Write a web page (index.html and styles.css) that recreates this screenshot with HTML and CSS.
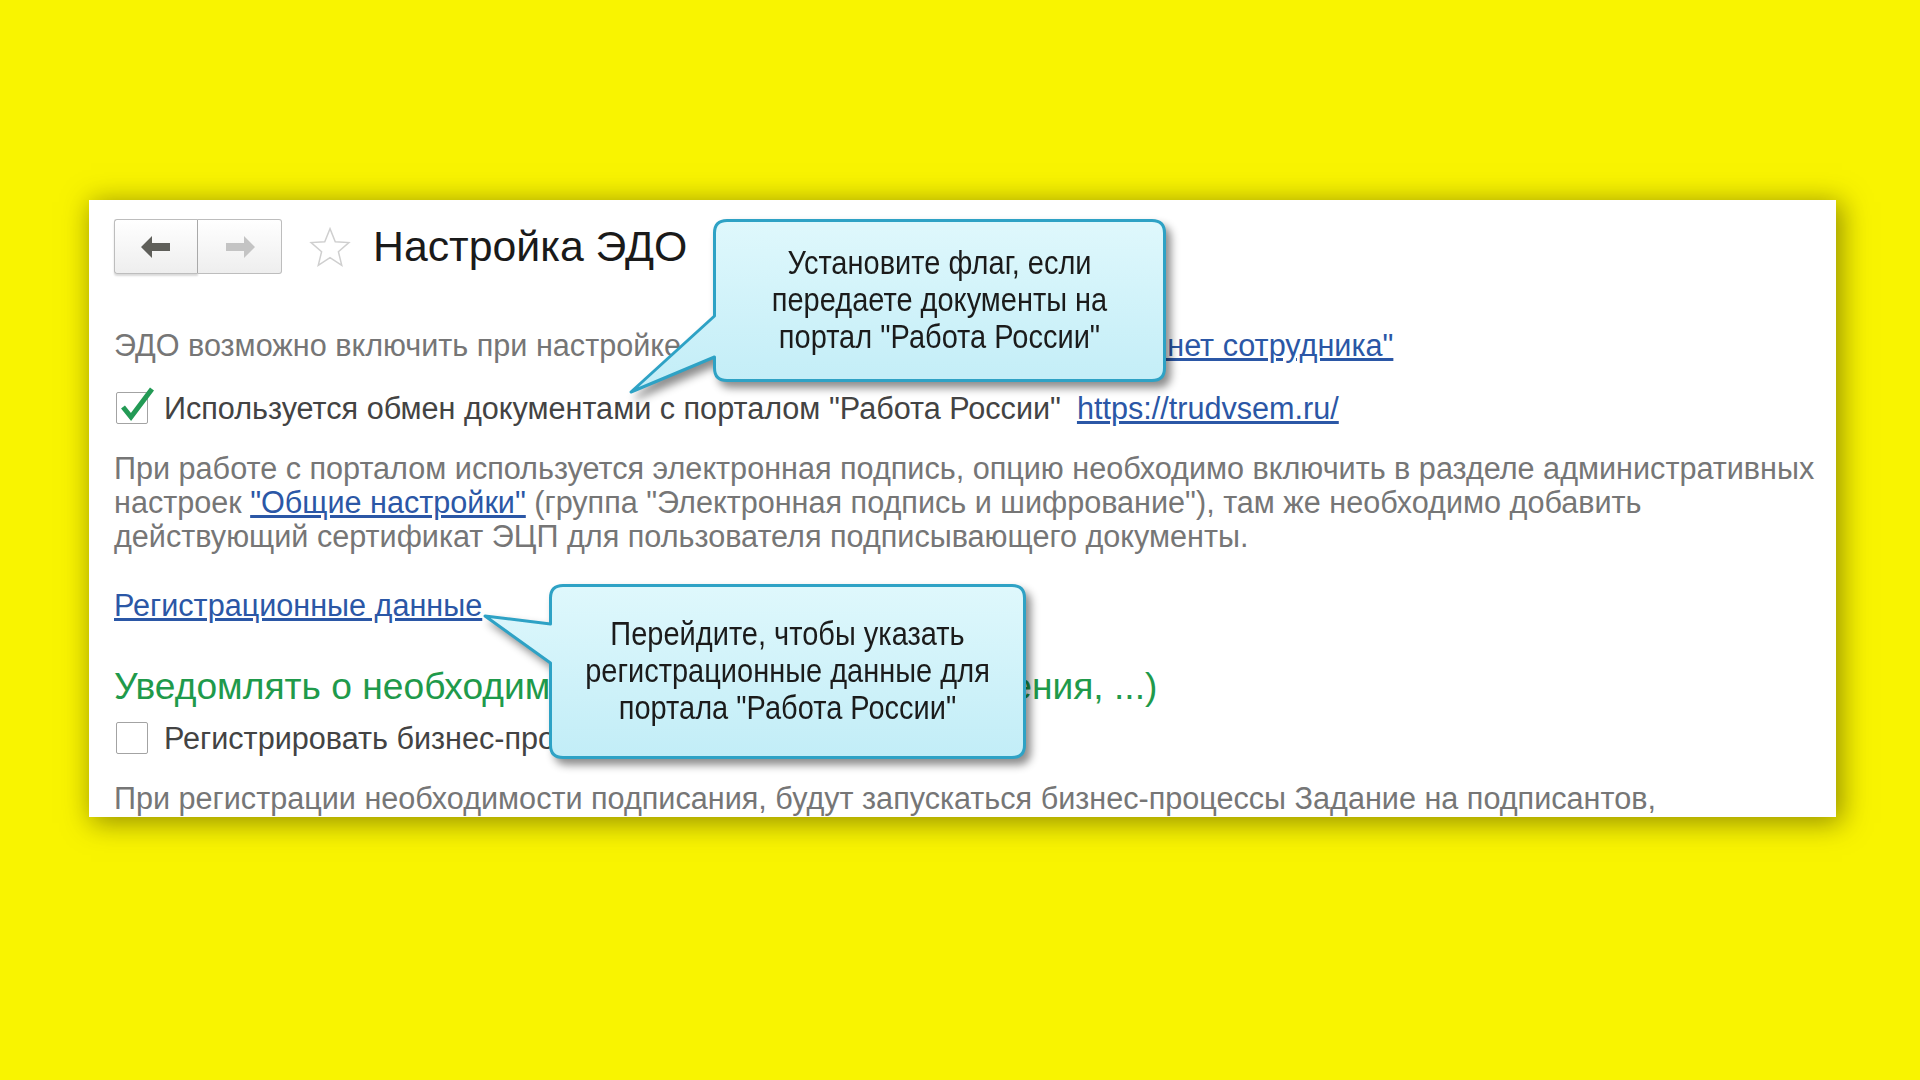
FILE: index.html
```html
<!DOCTYPE html>
<html lang="ru">
<head>
    <meta charset="UTF-8">
    <title>Настройка ЭДО</title>
    <link rel="stylesheet" href="styles.css">
</head>
<body>
    <div class="panel">
        <div class="header">
            <div class="nav">
                <span class="nav-btn back">
                    <svg width="30" height="22" viewBox="0 0 30 22"><path d="M0 11 L11 0 V7 H29 V15 H11 V22 Z"/></svg>
                </span>
                <span class="nav-btn fwd">
                    <svg width="30" height="22" viewBox="0 0 30 22"><path d="M30 11 L19 0 V7 H1 V15 H19 V22 Z"/></svg>
                </span>
            </div>
            <svg class="star" width="42" height="42" viewBox="0 0 40 40"><path d="M20 2.5 L25 15 L38 15.8 L28 24.5 L31.2 37.5 L20 30.2 L8.8 37.5 L12 24.5 L2 15.8 L15 15 Z"/></svg>
            <h1 class="title">Настройка ЭДО</h1>
        </div>

        <p class="note first">ЭДО возможно включить при настройке интеграции с приложением <a href="#">"Кабинет сотрудника"</a></p>

        <div class="check-row">
            <span class="box checked">
                <svg width="40" height="36" viewBox="0 0 40 36"><polyline points="7,20 15,30 36,2"/></svg>
            </span>
            <span class="label">Используется обмен документами с порталом "Работа России"</span>
            <a href="#" class="url">https://trudvsem.ru/</a>
        </div>

        <p class="note para">При работе с порталом используется электронная подпись, опцию необходимо включить в разделе административных<br>
            настроек <a href="#">"Общие настройки"</a> (группа "Электронная подпись и шифрование"), там же необходимо добавить<br>
            действующий сертификат ЭЦП для пользователя подписывающего документы.</p>

        <a href="#" class="reg-link">Регистрационные данные</a>

        <h2 class="group-title">Уведомлять о необходимости подписания (уведомления, ...)</h2>

        <div class="check-row second">
            <span class="box"></span>
            <span class="label">Регистрировать бизнес-процессы на подписание</span>
        </div>

        <p class="note last">При регистрации необходимости подписания, будут запускаться бизнес-процессы Задание на подписантов,</p>

        <!-- подсказки -->
        <div class="callout callout-flag">
            <svg class="bubble" width="453" height="163">
                <defs>
                    <linearGradient id="fill1" x1="0" y1="0" x2="0" y2="1">
                        <stop offset="0" stop-color="#dff8fc"/>
                        <stop offset="1" stop-color="#c2edf7"/>
                    </linearGradient>
                </defs>
                <path d="M14,1.5 H439 Q451.5,1.5 451.5,14 V149 Q451.5,161.5 439,161.5 H14 Q1.5,161.5 1.5,149 V138 L-82,173 L1.5,97 V14 Q1.5,1.5 14,1.5 Z" fill="url(#fill1)"/>
            </svg>
            <div class="callout-text">Установите флаг, если<br>передаете документы на<br>портал "Работа России"</div>
        </div>

        <div class="callout callout-reg">
            <svg class="bubble" width="477" height="175">
                <defs>
                    <linearGradient id="fill2" x1="0" y1="0" x2="0" y2="1">
                        <stop offset="0" stop-color="#dff8fc"/>
                        <stop offset="1" stop-color="#c2edf7"/>
                    </linearGradient>
                </defs>
                <path d="M14,1.5 H463 Q475.5,1.5 475.5,14 V161 Q475.5,173.5 463,173.5 H14 Q1.5,173.5 1.5,161 V79 L-64,32 L1.5,40 V14 Q1.5,1.5 14,1.5 Z" fill="url(#fill2)"/>
            </svg>
            <div class="callout-text">Перейдите, чтобы указать<br>регистрационные данные для<br>портала "Работа России"</div>
        </div>
    </div>
</body>
</html>
```

FILE: styles.css
```css
body {
    margin: 0;
    padding: 0;
    width: 1920px;
    height: 1080px;
    overflow: hidden;
    background-color: #f9f400;
    font-family: "Liberation Sans", Arial, sans-serif;
}

.panel {
    position: relative;
    box-sizing: border-box;
    width: 1747px;
    height: 617px;
    margin: 200px 0 0 89px;
    padding: 19px 20px 0 25px;
    background-color: #fff;
    overflow: hidden;
    box-shadow: 4px 4px 26px 2px rgba(70, 64, 0, 0.55);
}

.header {
    display: flex;
    align-items: center;
    height: 55px;
}

.nav {
    display: flex;
    height: 55px;
}

    .nav-btn {
        display: flex;
        align-items: center;
        justify-content: center;
        box-sizing: border-box;
        width: 84px;
        height: 55px;
        border: 1px solid #bdbdbd;
        background: linear-gradient(#ffffff, #eeeeee);
    }

    .nav-btn.back {
        border-radius: 3px 0 0 3px;
        border-right-color: #a9a9a9;
        box-shadow: 0 2px 2px rgba(0, 0, 0, 0.15);
    }

        .nav-btn.back path {
            fill: #5f5f5a;
        }

    .nav-btn.fwd {
        border-left: none;
        border-radius: 0 3px 3px 0;
    }

        .nav-btn.fwd path {
            fill: #c4c4c4;
        }

.star {
    margin-left: 27px;
}

    .star path {
        fill: #fff;
        stroke: #cfcfcf;
        stroke-width: 1.4;
    }

.title {
    margin: 0 0 0 22px;
    font-size: 42.8px;
    font-weight: normal;
    color: #1a1a1a;
    line-height: 55px;
}

a {
    color: #2b57a6;
    text-decoration: underline;
}

.note {
    margin: 0;
    font-size: 30.6px;
    line-height: 34px;
    color: #767676;
    white-space: nowrap;
}

    .note.first {
        margin-top: 54px;
    }

    .note.para {
        margin-top: 26px;
    }

    .note.last {
        margin-top: 26px;
    }

.check-row {
    display: flex;
    align-items: center;
    height: 34px;
    margin-top: 29px;
    font-size: 30.6px;
    line-height: 34px;
    white-space: nowrap;
}

    .check-row.second {
        margin-top: 13px;
    }

.box {
    position: relative;
    box-sizing: border-box;
    width: 32px;
    height: 32px;
    margin-left: 2px;
    border: 1px solid #a3a3a3;
    border-radius: 2px;
    background: #fff;
    flex-shrink: 0;
}

    .box svg {
        position: absolute;
        left: -1px;
        top: -6px;
    }

    .box polyline {
        fill: none;
        stroke: #239a55;
        stroke-width: 5;
    }

.label {
    margin-left: 16px;
    color: #434343;
}

.url {
    margin-left: 16px;
}

.reg-link {
    display: inline-block;
    margin-top: 35px;
    font-size: 30.6px;
    line-height: 34px;
}

.group-title {
    margin: 42px 0 0 0;
    font-size: 37.2px;
    font-weight: normal;
    line-height: 44px;
    color: #1f9a4b;
    white-space: nowrap;
}

.callout {
    position: absolute;
}

.callout-flag {
    left: 624px;
    top: 19px;
    width: 453px;
    height: 163px;
}

.callout-reg {
    left: 460px;
    top: 384px;
    width: 477px;
    height: 175px;
}

.bubble {
    position: absolute;
    left: 0;
    top: 0;
    overflow: visible;
    filter: drop-shadow(5px 6px 4px rgba(0, 0, 0, 0.45));
}

    .bubble path {
        stroke: #2ea2c5;
        stroke-width: 3;
        stroke-linejoin: round;
    }

.callout-text {
    position: absolute;
    inset: 0;
    display: flex;
    align-items: center;
    justify-content: center;
    text-align: center;
    font-size: 29px;
    line-height: 33px;
    color: #1b1b1b;
    transform: scaleY(1.12);
}
```
